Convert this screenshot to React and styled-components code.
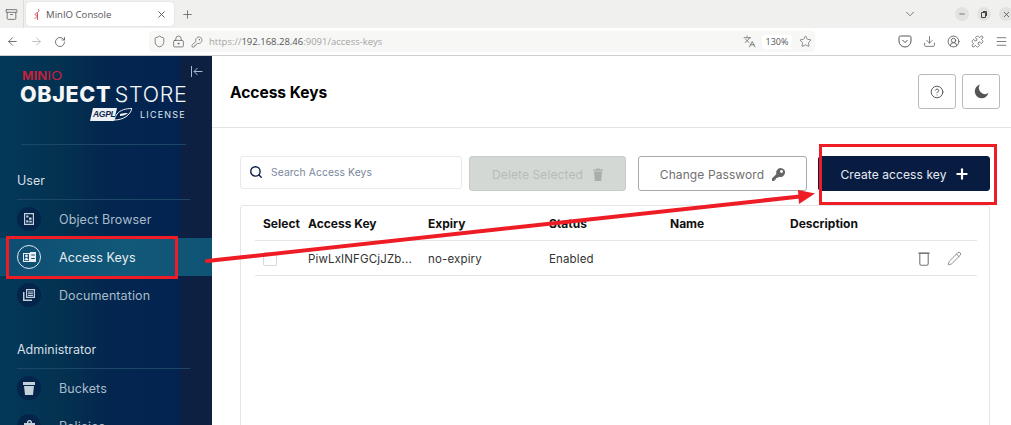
import React from "react";
import styled, { createGlobalStyle } from "styled-components";
import {
  ArrowLeft, ArrowRight, RotateCw, Shield, LockKeyhole, KeyRound, Languages, Star, Download,
  CircleUserRound, Puzzle, Menu, ChevronDown, X, Plus, Minus, Search, Pencil,
  CircleHelp, Archive,
} from "lucide-react";

const GlobalStyle = createGlobalStyle`
  html, body { margin: 0; padding: 0; height: 425px; overflow: hidden; background: #fff; }
  body { font-family: Inter, "Liberation Sans", sans-serif; }
  * { box-sizing: border-box; }
`;

const Page = styled.div`
  position: relative;
  width: 1011px;
  height: 425px;
  overflow: hidden;
  display: flex;
  flex-direction: column;
`;

// browser chrome
const TabStrip = styled.div`
  height: 28px;
  background: #f0f0ee;
  display: flex;
  align-items: center;
  color: #55565a;
  flex: none;
`;
const TabGroup = styled.div`
  width: 24px;
  height: 28px;
  border-right: 1px solid #dcdcda;
  display: flex;
  align-items: center;
  justify-content: center;
  margin-right: 2px;
`;
const Tab = styled.div`
  width: 148px;
  height: 24px;
  background: #fff;
  border-radius: 4px;
  display: flex;
  align-items: center;
  padding: 0 7px 0 7px;
  font: 9.6px "Open Sans", sans-serif;
  color: #55565a;
  box-shadow: 0 0 2px rgba(0, 0, 0, 0.12);
`;
const TabTitle = styled.span`
  margin-left: 5px;
  flex: 1;
`;
const NewTab = styled.div`
  margin-left: 7px;
  display: flex;
`;
const WindowControls = styled.div`
  margin-left: auto;
  display: flex;
  align-items: center;
`;
const Chevron = styled.div`
  display: flex;
  margin-right: 30px;
`;
const WinButton = styled.div`
  width: 14px;
  height: 14px;
  border-radius: 50%;
  background: #e2e2e0;
  display: flex;
  align-items: center;
  justify-content: center;
  margin-left: 8px;
  color: #444;
  &:last-child {
    margin-right: -2px;
  }
`;
const NavBar = styled.div`
  height: 28px;
  background: #fff;
  border-bottom: 1px solid #cfcfcf;
  display: flex;
  align-items: center;
  color: #55565a;
  flex: none;
  overflow: hidden;
`;
const NavButton = styled.div`
  width: ${(p) => p.$w || 24}px;
  flex: none;
  display: flex;
  justify-content: center;
  color: ${(p) => p.$color || "#55565a"};
`;
const UrlBar = styled.div`
  margin-left: 77px;
  width: 666px;
  height: 21px;
  flex: none;
  background: #f7f7f6;
  border-radius: 4px;
  display: flex;
  align-items: center;
  padding-left: 1px;
  font: 9.5px "Open Sans", sans-serif;
  color: #a5a5a5;
`;
const UrlHost = styled.span`
  color: #55565a;
`;
const UrlText = styled.div`
  margin-left: 3px;
  flex: 1;
`;
const Zoom = styled.div`
  width: 30px;
  height: 14px;
  margin: 0 3px;
  border-radius: 3px;
  background: #fff;
  text-align: center;
  font-size: 9px;
  line-height: 14px;
  color: #555;
`;
const Tools = styled.div`
  margin-left: 78px;
  flex: none;
  display: flex;
`;

// console
const Body = styled.div`
  flex: 1;
  display: flex;
  min-height: 0;
`;
const Sidebar = styled.aside`
  width: 212px;
  flex: none;
  position: relative;
  background: linear-gradient(90deg, #03395a 0%, #04314f 30%, #03264f 50%, #032350 84%, #0d2042 86%, #0d2042 100%);
  color: #fff;
  padding: 15px 22px 0 17px;
`;
const Collapse = styled.div`
  position: absolute;
  left: 191px;
  top: 10px;
  color: #a9bccb;
  display: flex;
`;
const Logo = styled.div`
  margin-left: 4px;
  width: 165px;
  height: 74px;
  border-bottom: 1px solid #1d4767;
`;
const LogoMark = styled.div`
  font: 400 12px/11px "Liberation Sans", sans-serif;
  color: #c8213a;
  transform: scaleX(1.15);
  transform-origin: left;
  margin-left: 1px;
`;
const LogoMarkBold = styled.b`
  font-weight: 700;
`;
const LogoTitle = styled.div`
  margin: 1px 0 0 -1px;
  font-size: 21.5px;
  line-height: 23px;
  white-space: nowrap;
  color: #f4f6f8;
  font-weight: 300;
  letter-spacing: 0.65px;
  word-spacing: -3px;
`;
const LogoStrong = styled.b`
  font-weight: 800;
`;
const LicenseRow = styled.div`
  display: flex;
  align-items: center;
  margin: 1px 0 0 69px;
  height: 14px;
`;
const LicenseText = styled.span`
  margin-left: 8px;
  font-size: 9px;
  letter-spacing: 1.2px;
  color: #dfe6ec;
`;
const Agpl = styled.span`
  position: relative;
  width: 42px;
  height: 13px;
  flex: none;
  display: flex;
`;
const AgplText = styled.span`
  font: italic 800 8.5px/13px "Liberation Sans", sans-serif;
  color: #0a2a50;
  padding-left: 3px;
  letter-spacing: -0.3px;
  z-index: 1;
`;
const AgplShape = styled.svg`
  position: absolute;
  left: 0;
  top: 0;
`;
const Section = styled.div`
  margin-top: ${(p) => p.$top}px;
  height: 27px;
  border-bottom: 1px solid #1d4767;
  font-size: 12.5px;
  line-height: 15px;
  color: #d6dfe6;
`;
const Item = styled.div`
  height: 38px;
  display: flex;
  align-items: center;
  margin: 0 -22px 0 -17px;
  padding-left: 17px;
  font-size: 12.5px;
  letter-spacing: 0.1px;
  color: ${(p) => (p.$active ? "#e8eef3" : "#a9bccb")};
  background: ${(p) => (p.$active ? "linear-gradient(90deg, #0d4e72, #125878 60%, #0f5475)" : "none")};
`;
const ItemIcon = styled.div`
  width: 24px;
  height: 24px;
  border-radius: 50%;
  margin-right: 18px;
  display: flex;
  align-items: center;
  justify-content: center;
  background: ${(p) => (p.$active ? "none" : "#04244a")};
  border: ${(p) => (p.$active ? "1px solid #dfe6ec" : "none")};
`;

const Main = styled.main`
  flex: 1;
  min-width: 0;
  background: #fff;
`;
const Header = styled.header`
  height: 72px;
  border-bottom: 1px solid #e3e3e3;
  display: flex;
  align-items: center;
  padding: 0 11px 0 18px;
`;
const Title = styled.h1`
  margin: 2px 0 0;
  font-size: 15.5px;
  font-weight: 700;
  color: #000;
  flex: 1;
`;
const IconButton = styled.button`
  width: 38px;
  height: 35px;
  margin-left: 6px;
  background: #fff;
  border: 1px solid #bababa;
  border-radius: 3px;
  padding: 0;
  display: flex;
  align-items: center;
  justify-content: center;
  color: #5a5a5a;
`;
const Content = styled.div`
  padding: 28px 21px 0 28px;
`;
const Toolbar = styled.div`
  display: flex;
  align-items: flex-start;
`;
const SearchBox = styled.div`
  width: 222px;
  height: 33px;
  border: 1px solid #eaeaea;
  border-radius: 3px;
  display: flex;
  align-items: center;
  padding: 0 0 1px 8px;
  font-size: 10.3px;
  letter-spacing: 0.1px;
  color: #7a869c;
  gap: 8px;
`;
const ActionButton = styled.button`
  width: ${(p) => p.$w}px;
  height: 35px;
  margin-left: ${(p) => p.$ml}px;
  border-radius: 3px;
  font: 12px Inter, sans-serif;
  letter-spacing: 0.1px;
  display: flex;
  align-items: center;
  justify-content: center;
  gap: ${(p) => p.$gap || 8}px;
  padding: 1px 0 0 ${(p) => p.$pl || 0}px;
  ${(p) => p.$kind === "disabled" && "background:#d3d8d5;border:1px solid #c8ccc9;color:#b6bcb9;"}
  ${(p) => p.$kind === "outline" && "background:#fff;border:1px solid #a9a9a9;color:#707070;"}
  ${(p) => p.$kind === "primary" && "background:#081c42;border:1px solid #081c42;color:#e8ecf2;"}
`;
const TablePanel = styled.div`
  margin-top: 14px;
  height: 240px;
  border: 1px solid #e5e5e5;
  border-radius: 3px;
  padding: 0 12px 0 14px;
`;
const TableRow = styled.div`
  display: grid;
  grid-template-columns: 45px 120px 121px 121px 120px 1fr;
  height: ${(p) => p.$h}px;
  align-items: center;
  padding: ${(p) => (p.$head ? 0 : 1)}px 0 0 8px;
  border-bottom: 1px solid #e5e5e5;
  font-size: ${(p) => (p.$head ? 12 : 11.5)}px;
  font-weight: ${(p) => (p.$head ? 700 : 400)};
  color: ${(p) => (p.$head ? "#111" : "#333")};
  letter-spacing: ${(p) => (p.$head ? 0 : 0.15)}px;
`;
const Check = styled.span`
  width: 14px;
  height: 14px;
  border: 1px solid #d8d8d8;
  border-radius: 2px;
`;
const RowActions = styled.div`
  display: flex;
  justify-content: flex-end;
  align-items: center;
  gap: 17px;
  padding-right: 15px;
  color: #777;
`;

// screenshot annotations drawn on top of the page
const Annotations = styled.svg`
  position: absolute;
  left: 0;
  top: 0;
  pointer-events: none;
`;

const IconObject = () => (
  <svg width="10" height="12" viewBox="0 0 10 12" fill="#c4d0da">
    <path fillRule="evenodd" d="M0 0h10v12H0zM1.2 1.2v9.6h7.6V1.2z" />
    <path d="M2.2 2.4h2.2v2.2H2.2zM5 4.6h2.6v2.2H5zM2.2 7.2h2.2v2.2H2.2zM5.2 7.8h2.6v1.6H5.2z" />
  </svg>
);
const IconKeys = () => (
  <svg width="13" height="10" viewBox="0 0 13 10" fill="#e8eef3">
    <path fillRule="evenodd" d="M0 1h7v9H0zM1 2v7h5V2z" />
    <circle cx="3.5" cy="4" r="1.4" />
    <path d="M1.5 8.2c0-3 4-3 4 0zM7 0h6v10H7z" />
    <path d="M8.2 2.5h3.6v1H8.2zM8.2 6h3.6v1H8.2z" fill="#0f5475" />
  </svg>
);
const IconDocs = () => (
  <svg width="12" height="12" viewBox="0 0 12 12" fill="#c4d0da">
    <path fillRule="evenodd" d="M3 0h9v9H3zM4.2 1.2v6.6h6.6V1.2z" />
    <path d="M5 2.5h5v1H5zM5 4.2h5v1H5zM5 5.9h5v1H5zM0 3h1.5v7.5H9V12H0z" />
  </svg>
);
const IconBucket = () => (
  <svg width="12" height="13" viewBox="0 0 12 13" fill="#c4d0da">
    <path d="M0 0h12v3H0zM1 4h10l-1 9H2z" />
  </svg>
);
const IconPolicy = () => (
  <svg width="11" height="12" viewBox="0 0 11 12" fill="#c4d0da">
    <path d="M0 3h11v9H0zM3 3V1.5L4.5 0h2L8 1.5V3H6.5V1.5h-2V3z" />
  </svg>
);
const IconMoon = () => (
  <svg width="15" height="15" viewBox="0 0 15 15" fill="#555">
    <path d="M6 .5a7 7 0 1 0 8.5 8.6A6.2 6.2 0 0 1 6 .5z" />
  </svg>
);
const IconKey = () => (
  <svg width="13" height="13" viewBox="0 0 13 13" fill="#666">
    <path fillRule="evenodd" d="M8.5 0a4.5 4.5 0 1 1-1.6 8.7L5.5 10H4v1.5H2.5V13H0v-2.5l4.4-4.6A4.5 4.5 0 0 1 8.5 0zm1 2a1.4 1.4 0 1 0 0 2.9 1.4 1.4 0 0 0 0-2.9z" />
  </svg>
);
const IconBin = () => (
  <svg width="10" height="13" viewBox="0 0 10 13" fill="#a9aeab">
    <path d="M0 1.5h3.3V.4h3.4v1.1H10v1.2H0zM1 3.5h8L8.2 13H1.8z" />
  </svg>
);
const IconBinOutline = () => (
  <svg width="12" height="14" viewBox="0 0 12 14" fill="none" stroke="#777" strokeWidth="1.1">
    <path d="M.5 1.2h11" strokeWidth="1.6" />
    <path d="M1.8 1.5v10.2q0 1.6 1.6 1.6h5.2q1.6 0 1.6-1.6V1.5" />
  </svg>
);
const IconFavicon = () => (
  <svg width="8" height="13" viewBox="0 0 8 13" fill="none" stroke="#d4475a" strokeWidth="0.9">
    <path d="M5 1c1.5 1 1 2.5-.5 3.5S1 6 2.5 7c1 .6 2 .4 2.5-.2M4.5 4.5V12M4.5 8 1.5 11" />
  </svg>
);
const IconPocket = () => (
  <svg width="14" height="13" viewBox="0 0 14 13" fill="none" stroke="#55565a" strokeWidth="1">
    <path d="M1 2.5A1.5 1.5 0 0 1 2.5 1h9A1.5 1.5 0 0 1 13 2.5V6a6 6 0 0 1-12 0z" />
    <path d="M4.5 5 7 7.5 9.5 5" />
  </svg>
);

const items1 = [
  { label: "Object Browser", icon: <IconObject /> },
  { label: "Access Keys", icon: <IconKeys />, active: true },
  { label: "Documentation", icon: <IconDocs /> },
];
const items2 = [
  { label: "Buckets", icon: <IconBucket /> },
  { label: "Policies", icon: <IconPolicy /> },
];

const renderItem = (it) => (
  <Item key={it.label} $active={it.active}>
    <ItemIcon $active={it.active}>{it.icon}</ItemIcon>
    {it.label}
  </Item>
);

export default function App() {
  return (
    <Page>
      <GlobalStyle />
      <TabStrip>
        <TabGroup>
          <Archive size={13} strokeWidth={1.4} />
        </TabGroup>
        <Tab>
          <IconFavicon />
          <TabTitle>MinIO Console</TabTitle>
          <X size={11} />
        </Tab>
        <NewTab>
          <Plus size={13} strokeWidth={1.4} />
        </NewTab>
        <WindowControls>
          <Chevron><ChevronDown size={14} strokeWidth={1.3} /></Chevron>
          <WinButton><Minus size={8} /></WinButton>
          <WinButton>
            <svg width="6" height="7" viewBox="0 0 6 7" fill="none" stroke="currentColor">
              <path d="M.5 1.5h4v5h-4zM2 .5h3.5V5" />
            </svg>
          </WinButton>
          <WinButton><X size={9} /></WinButton>
        </WindowControls>
      </TabStrip>
      <NavBar>
        <NavButton><ArrowLeft size={13} strokeWidth={1.5} /></NavButton>
        <NavButton $color="#b5b5b5"><ArrowRight size={13} strokeWidth={1.5} /></NavButton>
        <NavButton><RotateCw size={12} strokeWidth={1.6} /></NavButton>
        <UrlBar>
          <NavButton $w={18}><Shield size={13} strokeWidth={1.3} /></NavButton>
          <NavButton $w={20}><LockKeyhole size={13} strokeWidth={1.3} /></NavButton>
          <NavButton $w={18}><KeyRound size={12} strokeWidth={1.3} /></NavButton>
          <UrlText>https://<UrlHost>192.168.28.46</UrlHost>:9091/access-keys</UrlText>
          <NavButton $w={20}><Languages size={13} strokeWidth={1.3} /></NavButton>
          <Zoom>130%</Zoom>
          <NavButton $w={20}><Star size={13} strokeWidth={1.2} /></NavButton>
        </UrlBar>
        <Tools>
          <NavButton><IconPocket /></NavButton>
          <NavButton><Download size={13} strokeWidth={1.4} /></NavButton>
          <NavButton><CircleUserRound size={13} strokeWidth={1.6} /></NavButton>
          <NavButton><Puzzle size={13} strokeWidth={1.4} /></NavButton>
          <NavButton><Menu size={13} strokeWidth={1.4} /></NavButton>
        </Tools>
      </NavBar>
      <Body>
        <Sidebar>
          <Collapse>
            <svg width="12" height="11" viewBox="0 0 12 11" fill="none" stroke="currentColor" strokeWidth="1">
              <path d="M.5 0v11M11.5 5.5H3M6.5 2 3 5.5 6.5 9" />
            </svg>
          </Collapse>
          <Logo>
            <LogoMark><LogoMarkBold>MIN</LogoMarkBold>IO</LogoMark>
            <LogoTitle><LogoStrong>OBJECT</LogoStrong> STORE</LogoTitle>
            <LicenseRow>
              <Agpl>
                <AgplShape width="42" height="13" viewBox="0 0 42 13">
                  <path d="M3 0h24l-3 13H0z" fill="#eef1f4" />
                  <path d="M27 6C30 2 36 .5 42 .5 40 7 34 12 24 12c1-3 2-4 3-6z" fill="none" stroke="#eef1f4" strokeWidth="1" />
                  <path d="M30 6c3-1 5-1 8-1-2 2-5 3-8 3z" fill="#eef1f4" />
                </AgplShape>
                <AgplText>AGPL</AgplText>
              </Agpl>
              <LicenseText>LICENSE</LicenseText>
            </LicenseRow>
          </Logo>
          <Section $top={28}>User</Section>
          {items1.map(renderItem)}
          <Section $top={28}>Administrator</Section>
          {items2.map(renderItem)}
        </Sidebar>
        <Main>
          <Header>
            <Title>Access Keys</Title>
            <IconButton><CircleHelp size={14} strokeWidth={1.7} /></IconButton>
            <IconButton><IconMoon /></IconButton>
          </Header>
          <Content>
            <Toolbar>
              <SearchBox>
                <Search size={14} color="#0a2147" strokeWidth={2.4} />
                Search Access Keys
              </SearchBox>
              <ActionButton $kind="disabled" $w={157} $ml={7} $gap={10}>Delete Selected <IconBin /></ActionButton>
              <ActionButton $kind="outline" $w={169} $ml={12}>Change Password <IconKey /></ActionButton>
              <ActionButton $kind="primary" $w={172} $ml={11} $gap={7} $pl={2}>
                Create access key <Plus size={16} strokeWidth={3.2} color="#fff" />
              </ActionButton>
            </Toolbar>
            <TablePanel>
              <TableRow $head $h={35}>
                <span>Select</span>
                <span>Access Key</span>
                <span>Expiry</span>
                <span>Status</span>
                <span>Name</span>
                <span>Description</span>
              </TableRow>
              <TableRow $h={35}>
                <Check />
                <span>PiwLxINFGCjJZb...</span>
                <span>no-expiry</span>
                <span>Enabled</span>
                <span />
                <RowActions>
                  <IconBinOutline />
                  <Pencil size={15} strokeWidth={1.3} />
                </RowActions>
              </TableRow>
            </TablePanel>
          </Content>
        </Main>
      </Body>
      <Annotations width="1011" height="425" viewBox="0 0 1011 425">
        <rect x="7.5" y="237.5" width="169" height="40" fill="none" stroke="#ee1c25" strokeWidth="3" />
        <rect x="820.5" y="145.5" width="175" height="58" fill="none" stroke="#ee1c25" strokeWidth="3" />
        <path d="M207 261 L800 196.5" stroke="#ee1c25" strokeWidth="4" strokeLinecap="round" />
        <path d="M815 193.5 L798 190 L799 204 Z" fill="#ee1c25" />
      </Annotations>
    </Page>
  );
}
